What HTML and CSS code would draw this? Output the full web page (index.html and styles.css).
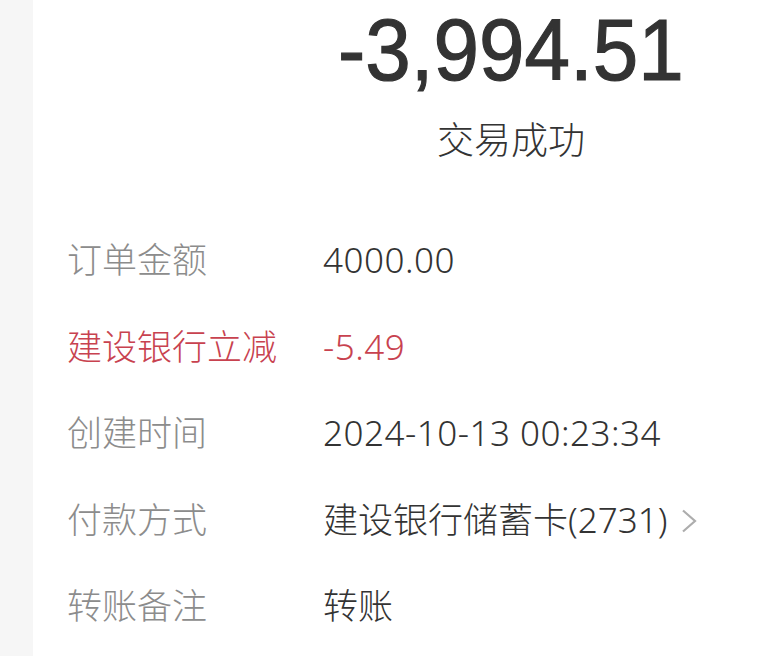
FILE: index.html
```html
<!DOCTYPE html>
<html lang="zh-CN">
<head>
<meta charset="utf-8">
<title>交易详情</title>
<link rel="stylesheet" href="styles.css">
</head>
<body>
<div class="page">
  <div class="side"></div>
  <main class="card">
    <header class="head">
      <div class="amount"><span class="amount-num">-3,994.51</span></div>
      <div class="status">交易成功</div>
    </header>
    <dl class="rows">
      <div class="row"><dt>订单金额</dt><dd class="num">4000.00</dd></div>
      <div class="row red"><dt>建设银行立减</dt><dd class="num">-5.49</dd></div>
      <div class="row"><dt>创建时间</dt><dd class="num">2024-10-13 00:23:34</dd></div>
      <div class="row"><dt>付款方式</dt><dd>建设银行储蓄卡(2731)<svg class="chev" width="16" height="24" viewBox="0 0 16 24"><polyline points="2,1.5 14,12 2,22.5" fill="none" stroke="#adadad" stroke-width="2.2"/></svg></dd></div>
      <div class="row"><dt>转账备注</dt><dd>转账</dd></div>
    </dl>
  </main>
</div>
</body>
</html>
```
FILE: styles.css
```css
html, body {
  margin: 0;
  padding: 0;
  background: #ffffff;
}
body {
  font-family: "Noto Sans", "Noto Sans CJK SC", sans-serif;
  color: #333333;
}
.page {
  display: flex;
  width: 767px;
  height: 656px;
  overflow: hidden;
}
.side {
  width: 33px;
  flex: none;
  background: #f6f6f6;
}
.card {
  flex: 1;
  background: #ffffff;
  padding-left: 34px;
}
.head {
  margin-left: 188px;
  text-align: center;
}
.amount {
  font-family: "Liberation Sans", sans-serif;
  font-size: 88px;
  line-height: 100px;
  font-weight: 400;
  color: #333333;
}
.amount-num {
  display: inline-block;
  transform: scaleX(0.93);
  transform-origin: center;
  -webkit-text-stroke: 1.2px #333333;
}
.status {
  margin-top: 13px;
  font-family: "Noto Sans CJK SC", sans-serif;
  font-size: 37px;
  line-height: 50px;
  font-weight: 300;
  color: #333333;
}
.rows {
  margin: 54px 0 0 0;
  padding: 0;
}
.row {
  display: grid;
  grid-template-columns: 256px 1fr;
  height: 86.5px;
  align-items: center;
  font-size: 35px;
  line-height: 50px;
  font-weight: 300;
}
.row dt {
  margin: 0;
  color: #8c8c8c;
}
.row dd {
  margin: 0;
  color: #333333;
  display: flex;
  align-items: center;
}
.row dd.num {
  letter-spacing: 0.5px;
}
.row.red dt, .row.red dd {
  color: #c8424f;
}
.chev {
  margin-left: 14px;
  margin-top: 2px;
}
```
